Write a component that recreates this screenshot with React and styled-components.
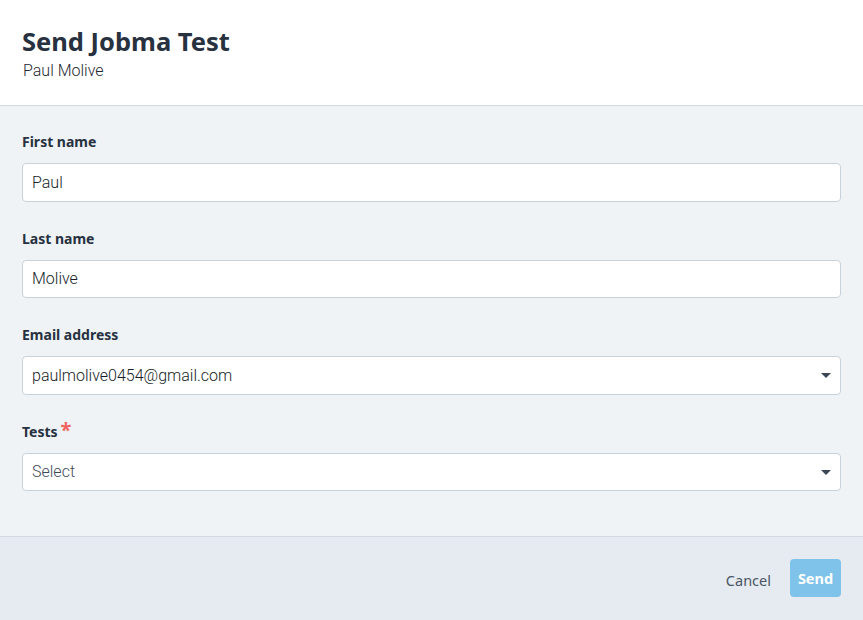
import React from 'react';
import styled, {createGlobalStyle} from 'styled-components';

const GlobalStyle = createGlobalStyle`
  html, body {
    margin: 0;
    padding: 0;
    background: #ffffff;
  }
  * {
    box-sizing: border-box;
  }
`;

const Modal = styled.div`
  width: 863px;
  height: 620px;
  display: flex;
  flex-direction: column;
  font-family: "Noto Sans", sans-serif;
  color: #27313f;
`;

const Header = styled.div`
  height: 106px;
  background-color: #ffffff;
  border-bottom: 1px solid #d3d9e0;
  padding: 25px 22px 0;
`;

const Title = styled.h1`
  margin: 0;
  font-family: "Noto Sans", sans-serif;
  font-weight: 700;
  font-size: 25.5px;
  line-height: 32px;
  color: #27313f;
`;

const Subtitle = styled.div`
  margin-top: 4px;
  margin-left: 1px;
  font-family: Roboto, sans-serif;
  font-weight: 300;
  font-size: 16px;
  line-height: 20px;
  color: #1f2833;
`;

const Body = styled.div`
  flex: 1;
  background-color: #eff3f6;
  border-bottom: 1px solid #d3d9e0;
  padding: 26px 22px 0;
  display: flex;
  flex-direction: column;
  gap: 27px;
`;

const Field = styled.div`
  display: flex;
  flex-direction: column;
  gap: 11px;
`;

const Label = styled.label`
  display: flex;
  align-items: flex-start;
  font-family: "Noto Sans", sans-serif;
  font-weight: 700;
  font-size: 14px;
  line-height: 20px;
  color: #27313f;
`;

const Required = styled.span`
  color: #f06262;
  font-size: 20px;
  line-height: 16px;
  margin-left: 3px;
`;

const Input = styled.div`
  position: relative;
  height: 38.5px;
  background-color: #ffffff;
  border: 1px solid #c9d1da;
  border-radius: 4px;
  padding: 0 9px;
  display: flex;
  align-items: center;
  font-family: Roboto, sans-serif;
  font-weight: 300;
  font-size: 16px;
  color: ${({$placeholder}) => ($placeholder ? '#3f4a58' : '#161e28')};
`;

const Caret = styled.span`
  position: absolute;
  right: 9px;
  top: 50%;
  margin-top: -2px;
  width: 0;
  height: 0;
  border-left: 5px solid transparent;
  border-right: 5px solid transparent;
  border-top: 5px solid #3c4756;
`;

const Footer = styled.div`
  height: 83px;
  background-color: #e6ebf1;
  display: flex;
  justify-content: flex-end;
  align-items: center;
  gap: 19px;
  padding: 0 22px 1px;
`;

const CancelButton = styled.button`
  border: none;
  background: none;
  padding: 0;
  margin-top: 3px;
  font-family: "Noto Sans", sans-serif;
  font-size: 14.5px;
  color: #4a5563;
  cursor: pointer;
`;

const SendButton = styled.button`
  height: 38px;
  width: 51px;
  border: none;
  border-radius: 4px;
  background-color: #80c3ea;
  color: #ffffff;
  font-family: "Noto Sans", sans-serif;
  font-weight: 700;
  font-size: 14.5px;
  padding: 0;
`;

const fields = [
  {label: 'First name', value: 'Paul'},
  {label: 'Last name', value: 'Molive'},
  {label: 'Email address', value: 'paulmolive0454@gmail.com', select: true},
  {label: 'Tests', value: 'Select', select: true, required: true, placeholder: true},
];

const App = () => {
  return (
    <>
      <GlobalStyle />
      <Modal>
        <Header>
          <Title>Send Jobma Test</Title>
          <Subtitle>Paul Molive</Subtitle>
        </Header>
        <Body>
          {fields.map((f) => (
            <Field key={f.label}>
              <Label>
                {f.label}
                {f.required && <Required>*</Required>}
              </Label>
              <Input $placeholder={f.placeholder}>
                {f.value}
                {f.select && <Caret />}
              </Input>
            </Field>
          ))}
        </Body>
        <Footer>
          <CancelButton>Cancel</CancelButton>
          <SendButton>Send</SendButton>
        </Footer>
      </Modal>
    </>
  );
};

export default App;
